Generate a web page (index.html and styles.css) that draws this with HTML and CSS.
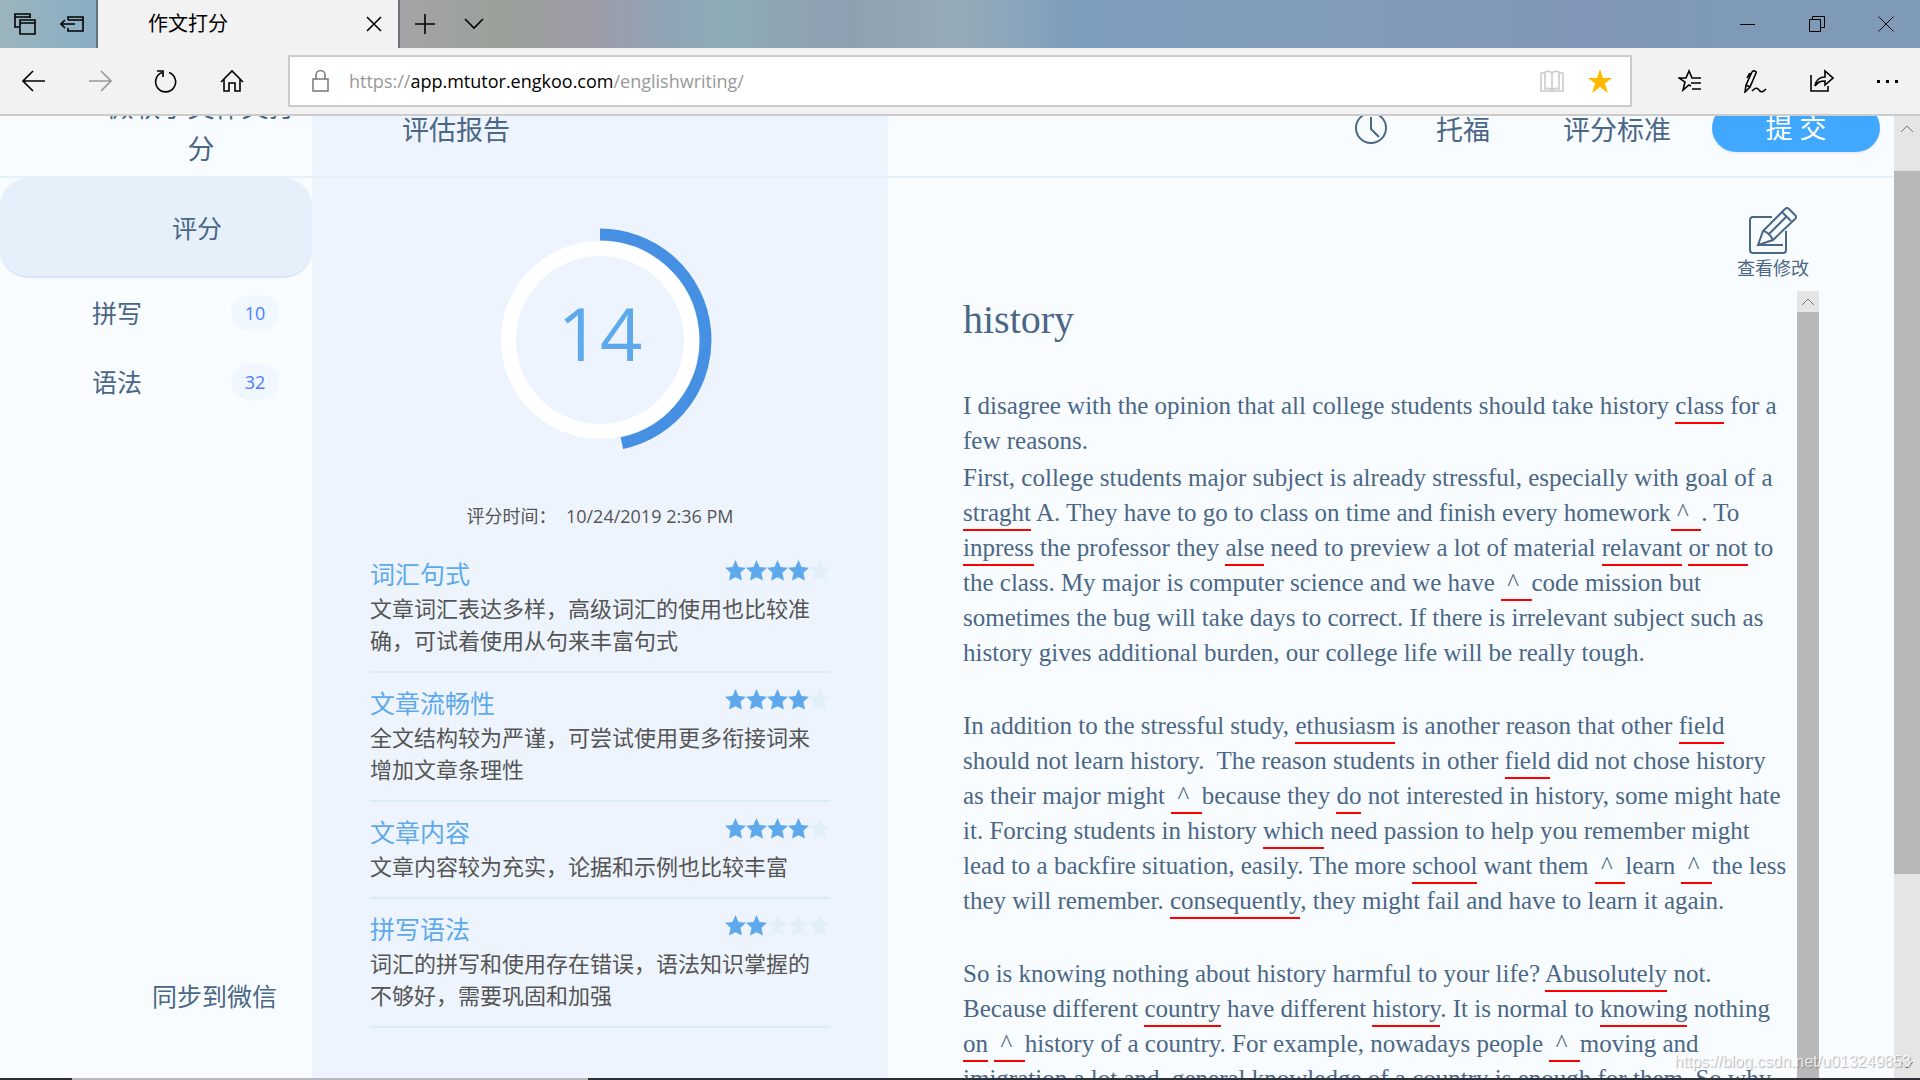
FILE: index.html
```html
<!DOCTYPE html>
<html lang="zh-CN">
<head>
  <meta charset="UTF-8">
  <meta name="viewport" content="width=device-width, initial-scale=1.0">
  <title>作文打分</title>
  <link rel="stylesheet" href="styles.css">
</head>
<body>
  <svg class="defs" aria-hidden="true">
    <symbol id="star" viewBox="0 0 20 20">
      <path d="M10 0l2.9 6.6 7.1.7-5.3 4.9 1.5 7.3L10 16.4l-6.2 3.1 1.5-7.3L0 7.300l7.100-.7z"/>
    </symbol>
    <symbol id="up" viewBox="0 0 14 8"><path d="M1 7l6-6 6 6"/></symbol>
    <symbol id="down" viewBox="0 0 14 8"><path d="M1 1l6 6 6-6"/></symbol>
  </svg>

  <!-- Tabs -->
  <div class="tab-strip">
    <div class="tab-tools">
      <button class="icon-btn" aria-label="标签页">
        <svg width="22" height="22" viewBox="0 0 22 22"><path d="M5 14H1V1h15v4M1 4h15M6 7h15v14H6zM6 10h15"/></svg>
      </button>
      <button class="icon-btn" aria-label="搁置标签页">
        <svg width="24" height="18" viewBox="0 0 24 18"><path d="M8 5V2h15v14H8v-3M8 5h15M1 9h14M5 5L1 9l4 4"/></svg>
      </button>
    </div>
    <div class="tab">
      <span class="tab-title">作文打分</span>
      <button class="icon-btn" aria-label="关闭标签页">
        <svg width="16" height="16" viewBox="0 0 16 16"><path d="M1 1l14 14M15 1L1 15"/></svg>
      </button>
    </div>
    <div class="tab-new">
      <button class="icon-btn" aria-label="新建标签页">
        <svg width="22" height="22" viewBox="0 0 22 22"><path d="M11 1v20M1 11h20"/></svg>
      </button>
      <button class="icon-btn" aria-label="标签页预览">
        <svg width="20" height="12" viewBox="0 0 20 12"><path d="M1 1l9 9 9-9"/></svg>
      </button>
    </div>
    <div class="window-controls">
      <button class="icon-btn" aria-label="最小化">
        <svg width="16" height="16" viewBox="0 0 16 16"><path class="thin" d="M0 8.500h15"/></svg>
      </button>
      <button class="icon-btn" aria-label="还原">
        <svg width="16" height="16" viewBox="0 0 16 16"><path class="thin" d="M.5 3.500h11v12H.5zM3.500 3.500v-3h12v11h-4"/></svg>
      </button>
      <button class="icon-btn" aria-label="关闭">
        <svg width="16" height="16" viewBox="0 0 16 16"><path class="thin" d="M.5.5l15 15M15.500.5l-15 15"/></svg>
      </button>
    </div>
  </div>

  <!-- Address bar -->
  <div class="toolbar">
    <div class="nav-buttons">
      <button class="icon-btn" aria-label="后退">
        <svg width="24" height="22" viewBox="0 0 24 22"><path d="M1 11h22M11 1L1 11l10 10"/></svg>
      </button>
      <button class="icon-btn disabled" aria-label="前进">
        <svg width="24" height="22" viewBox="0 0 24 22"><path d="M1 11h22M13 1l10 10-10 10"/></svg>
      </button>
      <button class="icon-btn" aria-label="刷新">
        <svg width="24" height="24" viewBox="0 0 24 24"><path d="M15 3.500A10 10 0 1 1 8 3.600M3 2h6v6"/></svg>
      </button>
      <button class="icon-btn" aria-label="主页">
        <svg width="24" height="24" viewBox="0 0 24 24"><path d="M1 13L12 2l11 11M4 10v12h5v-8h6v8h5V10"/></svg>
      </button>
    </div>
    <div class="address">
      <svg class="lock" width="18" height="24" viewBox="0 0 18 24"><path d="M1 10h15v12H1zM4 10V6a4.500 4.500 0 0 1 9 0v4"/></svg>
      <div class="url" role="textbox" aria-label="地址" contenteditable="true" spellcheck="false">https://<span class="host">app.mtutor.engkoo.com</span>/englishwriting/</div>
      <div class="address-buttons">
        <button class="icon-btn" aria-label="阅读视图">
          <svg class="book" width="24" height="24" viewBox="0 0 24 24"><path d="M12 4c-2-2-5-2-7-1v17c2-1 5-1 7 1 2-2 5-2 7-1V3c-2-1-5-1-7 1zv17M5 4H1v18h22V4h-4"/></svg>
        </button>
        <button class="icon-btn" aria-label="收藏">
          <svg class="fav" width="24" height="24" viewBox="0 0 24 24"><path d="M12 0l3 9h9l-7 5.500 3 9.500-8-6-8 6 3-9.500L0 9h9z"/></svg>
        </button>
      </div>
    </div>
    <div class="tool-buttons">
      <button class="icon-btn" aria-label="收藏夹">
        <svg width="24" height="24" viewBox="0 0 24 24"><path d="M13 17l-2-1-6 5 2-8-6-4h7l3-7 3 7h9M13 14h10M14 20h9"/></svg>
      </button>
      <button class="icon-btn" aria-label="添加笔记">
        <svg width="24" height="24" viewBox="0 0 24 24"><path d="M1 23l1-7L8 3c1-2 5-1 4 1L6 18zM2 16l4 2M6 4L3 9M8 22c3-3 5-4 7-1s4 2 7-1"/></svg>
      </button>
      <button class="icon-btn" aria-label="共享">
        <svg width="24" height="24" viewBox="0 0 24 24"><path d="M1 6v16h17v-5M5 17c1-6 4-9 10-9V2l8 7-8 7v-4c-5 0-7 1-10 5z"/></svg>
      </button>
      <button class="icon-btn" aria-label="更多">
        <svg width="24" height="24" viewBox="0 0 24 24"><path class="dots" d="M1 11h3v3H1zM10 11h3v3h-3zM19 11h3v3h-3z"/></svg>
      </button>
    </div>
  </div>

  <div class="viewport">
    <div class="page">
      <header class="header">
        <h1 class="brand">微软小英作文打分</h1>
        <h2 class="report-title">评估报告</h2>
        <div class="actions">
          <svg class="clock" width="34" height="34" viewBox="0 0 34 34"><circle cx="17" cy="17" r="15"/><path d="M17 6v12l8 8"/></svg>
          <a class="exam" href="#">托福</a>
          <a class="standard" href="#">评分标准</a>
          <button class="submit">提 交</button>
        </div>
      </header>

      <div class="columns">
        <nav class="sidebar">
          <a class="side-item active" href="#">评分</a>
          <a class="side-item" href="#">拼写 <span class="badge">10</span></a>
          <a class="side-item" href="#">语法 <span class="badge">32</span></a>
          <a class="sync" href="#">同步到微信</a>
        </nav>

        <section class="report">
          <div class="score">
            <svg class="ring" width="224" height="224" viewBox="0 0 224 224">
              <circle class="ring-base" cx="112" cy="112" r="91.500"/>
              <path class="ring-value" d="M112 6.500A105.500 105.500 0 0 1 133.900 215.200"/>
            </svg>
            <span class="score-number">14</span>
          </div>
          <p class="time">评分时间：&nbsp; 10/24/2019 2:36 PM</p>

          <div class="item">
            <div class="item-head">
              <h3>词汇句式</h3>
              <div class="stars" role="img" aria-label="4/5">
                <svg><use href="#star"/></svg><svg><use href="#star"/></svg><svg><use href="#star"/></svg><svg><use href="#star"/></svg><svg class="off"><use href="#star"/></svg>
              </div>
            </div>
            <p>文章词汇表达多样，高级词汇的使用也比较准确，可试着使用从句来丰富句式</p>
          </div>
          <div class="item">
            <div class="item-head">
              <h3>文章流畅性</h3>
              <div class="stars" role="img" aria-label="4/5">
                <svg><use href="#star"/></svg><svg><use href="#star"/></svg><svg><use href="#star"/></svg><svg><use href="#star"/></svg><svg class="off"><use href="#star"/></svg>
              </div>
            </div>
            <p>全文结构较为严谨，可尝试使用更多衔接词来增加文章条理性</p>
          </div>
          <div class="item">
            <div class="item-head">
              <h3>文章内容</h3>
              <div class="stars" role="img" aria-label="4/5">
                <svg><use href="#star"/></svg><svg><use href="#star"/></svg><svg><use href="#star"/></svg><svg><use href="#star"/></svg><svg class="off"><use href="#star"/></svg>
              </div>
            </div>
            <p>文章内容较为充实，论据和示例也比较丰富</p>
          </div>
          <div class="item">
            <div class="item-head">
              <h3>拼写语法</h3>
              <div class="stars" role="img" aria-label="2/5">
                <svg><use href="#star"/></svg><svg><use href="#star"/></svg><svg class="off"><use href="#star"/></svg><svg class="off"><use href="#star"/></svg><svg class="off"><use href="#star"/></svg>
              </div>
            </div>
            <p>词汇的拼写和使用存在错误，语法知识掌握的不够好，需要巩固和加强</p>
          </div>
        </section>

        <main class="editor">
          <button class="view-edit">
            <svg width="48" height="48" viewBox="0 0 48 48">
              <path d="M23 10H4q-3 0-3 3v30q0 3 3 3h30q3 0 3-3V24"/>
              <path d="M9 38l5-14L36 2q2-2 4 0l6 6q2 2 0 4L24 33zM9 38h25M14 24q6 1 10 9M33 5l9 9M38 9L19 28"/>
            </svg>
            <span>查看修改</span>
          </button>
          <div class="essay-wrap">
            <article class="essay" lang="en">
              <h2>history</h2>
              <p>I disagree with the opinion that all college students should take history <u>class</u> for a few reasons.</p>
              <p>First, college students major subject is already stressful, especially with goal of a <u>straght</u> A. They have to go to class on time and finish every homework<u>&nbsp;^&nbsp;&nbsp;</u>. To <u>inpress</u> the professor they <u>alse</u> need to preview a lot of material <u>relavant</u> <u>or not</u> to the class. My major is computer science and we have <u>&nbsp;^&nbsp;&nbsp;</u>code mission but sometimes the bug will take days to correct. If there is irrelevant subject such as history gives additional burden, our college life will be really tough.</p>
              <p class="gap">In addition to the stressful study, <u>ethusiasm</u> is another reason that other <u>field</u> should not learn history.&nbsp; The reason students in other <u>field</u> did not chose history as their major might <u>&nbsp;^&nbsp;&nbsp;</u>because they <u>do</u> not interested in history, some might hate it. Forcing students in history <u>which</u> need passion to help you remember might lead to a backfire situation, easily. The more <u>school</u> want them <u>&nbsp;^&nbsp;&nbsp;</u>learn <u>&nbsp;^&nbsp;&nbsp;</u>the less they will remember. <u>consequently</u>, they might fail and have to learn it again.</p>
              <p class="gap">So is knowing nothing about history harmful to your life? <u>Abusolutely</u> not. Because different <u>country</u> have different <u>history</u>. It is normal to <u>knowing</u> nothing <u>on</u> <u>&nbsp;^&nbsp;&nbsp;</u>history of a country. For example, nowadays people <u>&nbsp;^&nbsp;&nbsp;</u>moving and imigration a lot and, general knowledge of a country is enough for them. So why</p>
            </article>
            <div class="essay-scroll">
              <button aria-label="向上滚动"><svg width="14" height="8"><use href="#up"/></svg></button>
              <div class="thumb"></div>
            </div>
          </div>
        </main>
      </div>
    </div>

    <div class="page-scroll">
      <button aria-label="向上滚动"><svg width="14" height="8"><use href="#up"/></svg></button>
      <div class="thumb"></div>
      <button aria-label="向下滚动"><svg width="14" height="8"><use href="#down"/></svg></button>
    </div>
  </div>

  <div class="taskbar"></div>
  <div class="watermark">https://blog.csdn.net/u013249853</div>
</body>
</html>
```
FILE: styles.css
```css
* {
  margin: 0;
  padding: 0;
  box-sizing: border-box;
}

body {
  height: 100vh;
  display: flex;
  flex-direction: column;
  overflow: hidden;
  background-color: #f9fcff;
  color: #4a6785;
  font-family: "Open Sans", "Noto Sans CJK SC", sans-serif;
}

h1, h2, h3 {
  font-weight: 400;
}

a {
  color: inherit;
  text-decoration: none;
}

button {
  border: none;
  background: none;
  font-family: inherit;
  color: inherit;
  cursor: pointer;
}

svg {
  display: block;
  fill: none;
  stroke: currentColor;
  stroke-width: 2;
}

.defs {
  display: none;
}

.icon-btn {
  display: flex;
  align-items: center;
  justify-content: center;
  color: #000;
}

.icon-btn.disabled {
  color: #999;
}

.icon-btn path {
  stroke-width: 1.6;
}

.icon-btn .thin {
  stroke-width: 1;
}

/* Tabs */
.tab-strip {
  display: flex;
  flex: none;
  height: 48px;
  background: linear-gradient(90deg, #9bb5bd 0%, #89adc3 5%, #a3a4a7 21%, #9aa199 26%, #9d9ca8 31%, #8fa5b7 35%, #8dabb6 38%, #8f9fb1 44%, #96abb8 50%, #7d9dbd 56%, #819bb9 70%, #8196b8 83%, #7e9ab7 90%, #7f9ab7 100%);
}

.tab-tools {
  display: flex;
  width: 98px;
  padding-left: 14px;
  gap: 24px;
  border-right: 2px solid #62727b;
}

.tab {
  display: flex;
  align-items: center;
  justify-content: space-between;
  width: 302px;
  padding: 0 16px 0 50px;
  background-color: #f2f2f2;
  border-right: 2px solid #6d7074;
}

.tab-title {
  font-size: 20px;
  line-height: 28px;
  color: #000;
}

.tab-new {
  display: flex;
  padding-left: 14px;
  gap: 28px;
}

.window-controls {
  display: flex;
  margin-left: auto;
}

.window-controls .icon-btn {
  width: 69px;
}

/* Address bar */
.toolbar {
  display: flex;
  align-items: center;
  flex: none;
  height: 68px;
  background-color: #f2f2f2;
  border-bottom: 2px solid #ccc;
}

.nav-buttons {
  display: flex;
  width: 288px;
  padding-left: 22px;
  gap: 42px;
}

.address {
  display: flex;
  align-items: center;
  flex: 1;
  height: 52px;
  padding: 0 18px 0 22px;
  gap: 19px;
  background-color: #fff;
  border: 2px solid #ccc;
}

.address-buttons {
  display: flex;
  gap: 24px;
}

.lock {
  color: #777;
  stroke-width: 1.5;
}

.url {
  flex: 1;
  font-size: 18px;
  line-height: 28px;
  color: #999;
  outline: none;
}

.host {
  color: #000;
}

.book {
  color: #ccc;
}

.fav {
  fill: #ffb900;
  stroke: none;
}

.tool-buttons {
  display: flex;
  padding: 0 20px 0 46px;
  gap: 42px;
}

.dots {
  fill: #000;
  stroke: none;
}

/* Page */
.viewport {
  display: flex;
  flex: 1;
  min-height: 0;
}

.page {
  display: flex;
  flex-direction: column;
  flex: 1;
  min-width: 0;
  overflow: hidden;
  background: linear-gradient(#edf4fd, #edf4fd) 312px 0 / 576px 100% no-repeat;
}

.header,
.columns {
  display: grid;
  grid-template-columns: 312px 576px 1fr;
}

/* the page is scrolled down a little, so the header is partly hidden */
.header {
  flex: none;
  align-items: center;
  height: 98px;
  margin-top: -36px;
  border-bottom: 2px solid #e6f0fb;
  font-size: 27px;
}

.brand {
  width: 190px;
  margin-left: 106px;
  font-size: 27px;
  line-height: 42px;
  text-align: center;
}

.report-title {
  padding-left: 90px;
  font-size: 27px;
}

.actions {
  display: flex;
  align-items: center;
  justify-content: flex-end;
  padding-right: 14px;
}

.clock {
  margin-right: 48px;
}

.exam {
  margin-right: 73px;
}

.standard {
  margin-right: 41px;
}

.submit {
  width: 168px;
  height: 48px;
  border-radius: 24px;
  background-color: #40a9ff;
  color: #fff;
  font-size: 27px;
  line-height: 48px;
  box-shadow: 0 2px 2px rgba(0, 0, 0, 0.05);
}

.columns {
  flex: 1;
  min-height: 0;
}

/* Sidebar */
.sidebar {
  display: flex;
  flex-direction: column;
  font-size: 25px;
  line-height: 36px;
}

.side-item {
  display: flex;
  align-items: center;
  justify-content: space-between;
  height: 69px;
  padding: 0 33px 0 92px;
}

.side-item.active {
  height: 100px;
  justify-content: center;
  padding-top: 2px;
  padding-right: 10px;
  background-color: #e6f0fb;
  border-bottom: 2px solid #d6e5f8;
  border-radius: 28px;
}

.badge {
  width: 48px;
  border-radius: 18px;
  background-color: #f1f7ff;
  color: #4c7dff;
  font-size: 18px;
  text-align: center;
}

.sync {
  margin-top: auto;
  padding: 0 35px 64px;
  text-align: right;
}

/* Report */
.report {
  padding: 50px 58px 0;
}

.score {
  display: grid;
  place-items: center;
}

.ring,
.score-number {
  grid-area: 1 / 1;
}

.ring-base {
  stroke: #fff;
  stroke-width: 15;
}

.ring-value {
  stroke: #4590e2;
  stroke-width: 12;
}

.score-number {
  padding-bottom: 14px;
  font-size: 74px;
  line-height: 74px;
  color: #5ea9eb;
}

.time {
  margin: 50px 0 14px;
  font-size: 18px;
  line-height: 28px;
  text-align: center;
  color: #555;
}

.item {
  padding: 12px 0 15px;
  border-bottom: 2px solid #dce9f9;
}

.item-head {
  display: flex;
  justify-content: space-between;
}

.item h3 {
  font-size: 25px;
  line-height: 36px;
  color: #5ea9eb;
}

.item p {
  font-size: 22px;
  line-height: 32px;
  color: #555;
}

.stars {
  display: flex;
  padding-top: 4px;
  color: #5ea9eb;
}

.stars svg {
  width: 21px;
  height: 21px;
  fill: currentColor;
  stroke: none;
}

.stars .off {
  color: #e1eff8;
}

/* Essay */
.editor {
  display: flex;
  flex-direction: column;
  min-height: 0;
  padding: 29px 75px 0;
}

.view-edit {
  display: flex;
  flex-direction: column;
  align-items: center;
  align-self: flex-end;
  margin-right: 10px;
  padding-bottom: 10px;
  font-size: 18px;
  line-height: 26px;
}

.essay-wrap {
  display: flex;
  flex: 1;
  min-height: 0;
}

.essay {
  flex: 1;
  overflow: hidden;
  padding: 1px 6px 0 0;
  font-family: "Liberation Serif", serif;
  font-size: 25px;
  line-height: 35px;
}

.essay h2 {
  margin-bottom: 40px;
  font-size: 40px;
  line-height: 56px;
}

.essay p {
  margin-bottom: 2px;
}

.essay .gap {
  margin-top: 38px;
}

.essay u {
  padding-bottom: 3px;
  border-bottom: 2px solid #f00;
  text-decoration: none;
}

/* Scrollbars */
.essay-scroll {
  display: flex;
  flex-direction: column;
  width: 22px;
}

.essay-scroll button {
  display: flex;
  align-items: center;
  justify-content: center;
  height: 21px;
  background-color: #e5e5e5;
}

.essay-scroll .thumb {
  flex: 1;
}

.thumb {
  background-color: #b8b8b8;
}

.essay-scroll svg,
.page-scroll svg {
  color: #777;
  stroke-width: 1;
}

.page-scroll {
  display: grid;
  grid-template-rows: 55px 703fr 204fr;
  width: 26px;
  background-color: #e5e5e5;
}

.page-scroll button {
  display: flex;
  justify-content: center;
  padding: 9px 0;
}

.page-scroll button:last-child {
  align-items: flex-end;
}

.taskbar {
  flex: none;
  height: 2px;
  background: linear-gradient(90deg, #2c3036 72px, #b8babd 72px, #b8babd 588px, #2c3036 588px);
}

.watermark {
  position: absolute;
  right: 9px;
  bottom: 7px;
  font-family: "Liberation Sans", sans-serif;
  font-size: 16px;
  line-height: 22px;
  color: rgba(255, 255, 255, 0.8);
  text-shadow: 1px 1px 1px rgba(0, 0, 0, 0.3);
}
```
